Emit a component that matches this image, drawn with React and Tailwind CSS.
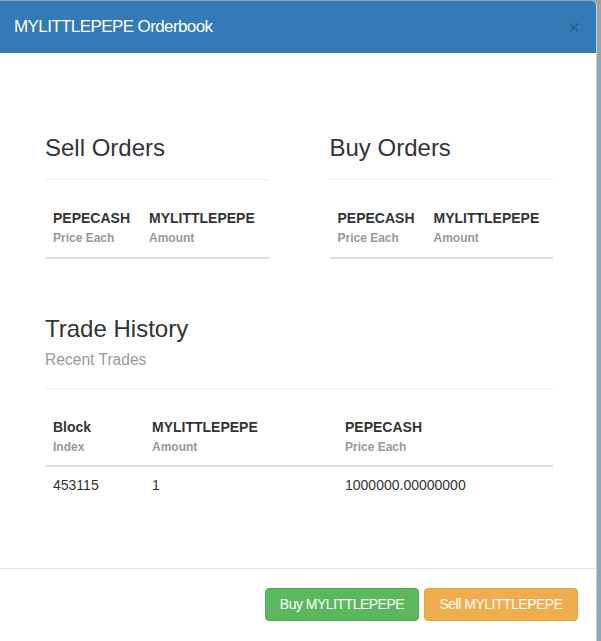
import React from "react";

function OrderTable() {
  return (
    <table className="mt-[20px] w-full table-fixed border-collapse">
      <thead>
        <tr className="border-b-2 border-[#ddd]">
          <th className="w-[96px] px-[8px] pt-[8px] pb-[8px] text-left align-bottom font-bold">
            <div className="text-[14px] leading-[20px] text-[#333]">PEPECASH</div>
            <div className="text-[12px] leading-[21px] text-[#999]">Price Each</div>
          </th>
          <th className="px-[8px] pt-[8px] pb-[8px] text-left align-bottom font-bold">
            <div className="text-[14px] leading-[20px] text-[#333]">MYLITTLEPEPE</div>
            <div className="text-[12px] leading-[21px] text-[#999]">Amount</div>
          </th>
        </tr>
      </thead>
    </table>
  );
}

function OrderSection({ title }) {
  return (
    <div>
      <h3 className="border-b border-[#eee] pb-[18px] text-[24px] leading-[26px] font-normal text-[#333]">
        {title}
      </h3>
      <OrderTable />
    </div>
  );
}

export default function App() {
  return (
    <div
      className="flex h-[641px] w-[601px] overflow-hidden bg-[#8fa7b3] pt-[1px]"
      style={{ fontFamily: '"Liberation Sans", Arial, Helvetica, sans-serif' }}
    >
      <div className="flex h-[700px] w-[597px] shrink-0 flex-col rounded-tr-[6px] border-r border-black/20 bg-white">
        {/* Header */}
        <div className="flex h-[52px] items-center justify-between rounded-tr-[5px] bg-[#337ab7] pl-[14px] pr-[16px]">
          <h4 className="text-[17px] leading-[24px] tracking-[-0.6px] text-white">
            MYLITTLEPEPE Orderbook
          </h4>
          <span className="text-[20px] font-normal leading-none text-[#2f5f8a]">×</span>
        </div>

        {/* Body */}
        <div className="pl-[45px] pr-[43px] pt-[82px] pb-[65px]">
          <div className="grid grid-cols-2 gap-x-[61px]">
            <OrderSection title="Sell Orders" />
            <OrderSection title="Buy Orders" />
          </div>

          <div className="mt-[57px]">
            <div className="border-b border-[#eee] pb-[18px]">
              <h3 className="text-[24px] leading-[26px] font-normal text-[#333]">Trade History</h3>
              <div className="mt-[8px] text-[15.6px] leading-[20px] text-[#999]">Recent Trades</div>
            </div>
            <table className="mt-[20px] w-full table-fixed border-collapse">
              <thead>
                <tr className="border-b-2 border-[#ddd]">
                  <th className="w-[99px] px-[8px] pt-[8px] pb-[7px] text-left align-bottom font-bold">
                    <div className="text-[14px] leading-[20px] text-[#333]">Block</div>
                    <div className="text-[12px] leading-[21px] text-[#999]">Index</div>
                  </th>
                  <th className="w-[193px] px-[8px] pt-[8px] pb-[7px] text-left align-bottom font-bold">
                    <div className="text-[14px] leading-[20px] text-[#333]">MYLITTLEPEPE</div>
                    <div className="text-[12px] leading-[21px] text-[#999]">Amount</div>
                  </th>
                  <th className="px-[8px] pt-[8px] pb-[7px] text-left align-bottom font-bold">
                    <div className="text-[14px] leading-[20px] text-[#333]">PEPECASH</div>
                    <div className="text-[12px] leading-[21px] text-[#999]">Price Each</div>
                  </th>
                </tr>
              </thead>
              <tbody>
                <tr className="text-[14px] leading-[20px] text-[#333]">
                  <td className="px-[8px] py-[8px]">453115</td>
                  <td className="px-[8px] py-[8px]">1</td>
                  <td className="px-[8px] py-[8px]">1000000.00000000</td>
                </tr>
              </tbody>
            </table>
          </div>
        </div>

        {/* Footer */}
        <div className="flex justify-end gap-[5px] border-t border-[#e5e5e5] pt-[19px] pr-[18px]">
          <button className="h-[33px] w-[154px] rounded-[4px] border border-[#4cae4c] bg-[#5cb85c] text-[14px] tracking-[-0.5px] text-white">
            Buy MYLITTLEPEPE
          </button>
          <button className="h-[33px] w-[154px] rounded-[4px] border border-[#eea236] bg-[#f0ad4e] text-[14px] tracking-[-0.5px] text-white">
            Sell MYLITTLEPEPE
          </button>
        </div>
      </div>
    </div>
  );
}
